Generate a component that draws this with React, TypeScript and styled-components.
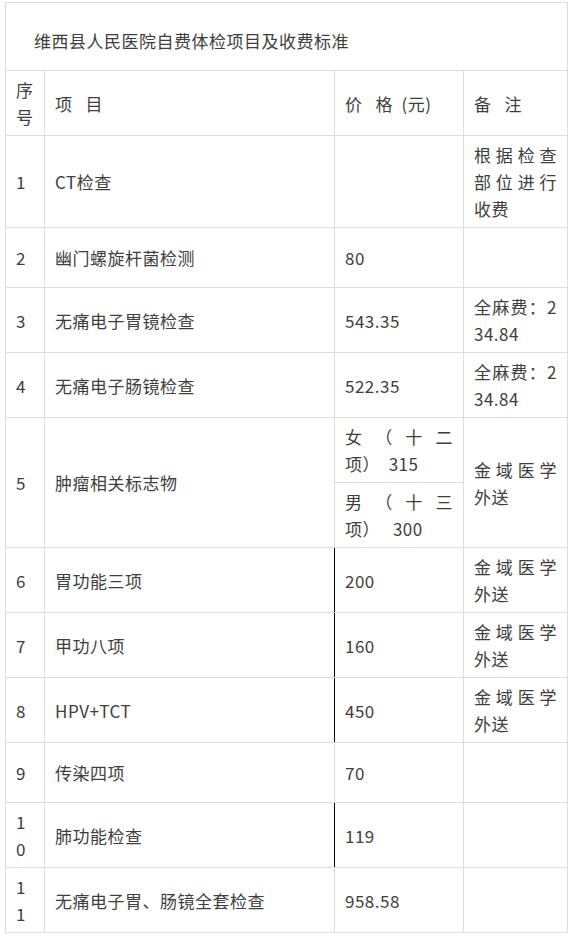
import React from 'react';
import styled, { createGlobalStyle } from 'styled-components';

const GlobalStyle = createGlobalStyle`
  html, body {
    margin: 0;
    padding: 0;
    background: #ffffff;
  }
  body {
    font-family: "Noto Sans CJK SC", "Noto Sans", sans-serif;
    color: #3e3e3e;
  }
`;

const Page = styled.div`
  padding: 2px 0 0 5px;
`;

const Table = styled.table`
  border-collapse: collapse;
  table-layout: fixed;
  width: 563px;
  font-size: 17px;
  line-height: 27px;
  letter-spacing: 0.5px;
`;

const Row = styled.tr<{ $height?: number }>`
  height: ${({ $height }) => $height ?? 60}px;
`;

const Cell = styled.td<{ $darkRight?: boolean }>`
  border: 1px solid #dddddd;
  ${({ $darkRight }) => $darkRight && 'border-right-color: #000000;'}
  padding: 5px 10px;
  vertical-align: middle;
  text-align: justify;
  word-break: break-all;
`;

const TitleCell = styled(Cell)`
  padding: 12px 10px 4px 28px;
  text-align: left;
`;

const JustLine = styled.span`
  display: block;
  text-align: justify;
  text-align-last: justify;
`;

type Item = { no: string; name: string; price?: string; note?: string; dark?: boolean };

const before: Item[] = [
  { no: '1', name: 'CT检查', note: '根据检查部位进行收费' },
  { no: '2', name: '幽门螺旋杆菌检测', price: '80' },
  { no: '3', name: '无痛电子胃镜检查', price: '543.35', note: '全麻费：234.84' },
  { no: '4', name: '无痛电子肠镜检查', price: '522.35', note: '全麻费：234.84' },
];

const after: Item[] = [
  { no: '6', name: '胃功能三项', price: '200', note: '金域医学外送', dark: true },
  { no: '7', name: '甲功八项', price: '160', note: '金域医学外送', dark: true },
  { no: '8', name: 'HPV+TCT', price: '450', note: '金域医学外送', dark: true },
  { no: '9', name: '传染四项', price: '70' },
  { no: '10', name: '肺功能检查', price: '119', dark: true },
  { no: '11', name: '无痛电子胃、肠镜全套检查', price: '958.58' },
];

const ItemRow = ({ item }: { item: Item }) => (
  <Row>
    <Cell>{item.no}</Cell>
    <Cell $darkRight={item.dark}>{item.name}</Cell>
    <Cell>{item.price}</Cell>
    <Cell>{item.note}</Cell>
  </Row>
);

export default function App() {
  return (
    <Page>
      <GlobalStyle />
      <Table>
        <colgroup>
          <col style={{ width: 39 }} />
          <col style={{ width: 290 }} />
          <col style={{ width: 129 }} />
          <col style={{ width: 104 }} />
        </colgroup>
        <tbody>
          <Row $height={68}>
            <TitleCell colSpan={4}>维西县人民医院自费体检项目及收费标准</TitleCell>
          </Row>
          <Row $height={65}>
            <Cell>序号</Cell>
            <Cell>项{'\u00a0\u00a0\u00a0'}目</Cell>
            <Cell>价{'\u00a0\u00a0\u00a0'}格{'\u00a0\u00a0'}(元)</Cell>
            <Cell>备{'\u00a0\u00a0\u00a0'}注</Cell>
          </Row>
          {before.map((item) => (
            <ItemRow key={item.no} item={item} />
          ))}
          <Row>
            <Cell rowSpan={2}>5</Cell>
            <Cell rowSpan={2}>肿瘤相关标志物</Cell>
            <Cell>
              <JustLine>女（十二</JustLine>
              项）{'\u00a0\u00a0'}315
            </Cell>
            <Cell rowSpan={2}>金域医学外送</Cell>
          </Row>
          <Row>
            <Cell>
              <JustLine>男（十三</JustLine>
              项）{'\u00a0\u00a0\u00a0'}300
            </Cell>
          </Row>
          {after.map((item) => (
            <ItemRow key={item.no} item={item} />
          ))}
        </tbody>
      </Table>
    </Page>
  );
}
